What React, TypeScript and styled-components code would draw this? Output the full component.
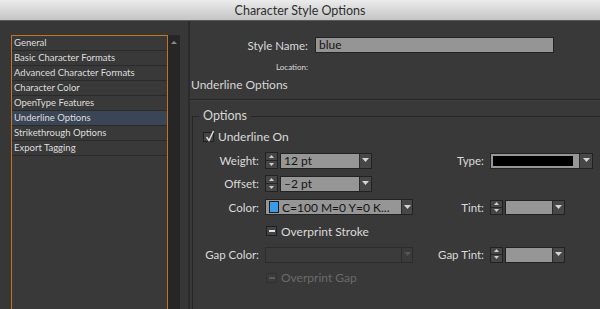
import React from 'react';
import styled, { createGlobalStyle } from 'styled-components';

const Global = createGlobalStyle`
  html, body { margin: 0; padding: 0; background: #393939; }
  body { font-family: Lato, "Open Sans", sans-serif; }
  * { box-sizing: border-box; }
`;

const Window = styled.div`
  width: 600px;
  height: 309px;
  overflow: hidden;
  display: flex;
  flex-direction: column;
  background: #393939;
`;

const TitleBar = styled.div`
  height: 21px;
  flex: none;
  display: flex;
  align-items: center;
  justify-content: center;
  background: linear-gradient(#ececec, #c4c4c4);
  border-bottom: 1px solid #585858;
  font-size: 12.5px;
  color: #2e2e2e;
`;

const Body = styled.div`
  flex: 1;
  display: flex;
  min-height: 0;
`;

const Sidebar = styled.div`
  width: 190px;
  flex: none;
  display: flex;
  padding: 14px 0 0 11px;
  border-right: 2px solid #2b2b2b;
  background: #373737;
`;

const List = styled.div`
  width: 157px;
  border: 1px solid #c37422;
  border-bottom: none;
  background: #393939;
  display: flex;
  flex-direction: column;
`;

const ListItem = styled.div<{ $selected?: boolean }>`
  height: 15px;
  flex: none;
  border-bottom: 1px solid #2a2a2a;
  padding-left: 2px;
  font-size: 9.5px;
  line-height: 14px;
  color: #dedede;
  background: ${(p) => (p.$selected ? '#3a4556' : 'transparent')};
  white-space: nowrap;
`;

const Scrollbar = styled.div`
  width: 12px;
  background: #262626;
  display: flex;
  justify-content: center;
  padding-top: 6px;
`;

const Main = styled.div`
  flex: 1;
  display: flex;
  flex-direction: column;
  min-width: 0;
`;

const StyleRow = styled.div`
  display: flex;
  align-items: center;
  margin-top: 16px;
  height: 16px;
`;

const Label = styled.div<{ $size?: number; $dim?: boolean }>`
  font-size: ${(p) => p.$size ?? 11.5}px;
  color: ${(p) => (p.$dim ? '#6a6a6a' : '#dadada')};
  white-space: nowrap;
`;

const RightLabel = styled(Label)<{ $w: number; $pad?: number }>`
  width: ${(p) => p.$w}px;
  flex: none;
  text-align: right;
  padding-right: ${(p) => p.$pad ?? 0}px;
`;

const NameInput = styled.div`
  margin-left: 7px;
  width: 239px;
  height: 16px;
  background: #959595;
  border: 1px solid #232323;
  font-size: 12px;
  line-height: 14px;
  color: #151515;
  padding-left: 3px;
`;

const LocationRow = styled.div`
  margin-top: 9px;
  height: 10px;
  display: flex;
  align-items: center;
`;

const Heading = styled.div`
  margin-top: 6px;
  height: 14px;
  font-size: 12px;
  line-height: 14px;
  color: #d6d6d6;
  padding-left: 1px;
`;

const Rule = styled.div`
  margin-top: 7px;
  height: 2px;
  border-top: 1px solid #262626;
  border-bottom: 1px solid #3d3d3d;
`;

const Fieldset = styled.fieldset`
  margin: 8px 0 0 2px;
  padding: 0;
  min-width: 0;
  flex: 1;
  border: 1px solid #262626;
  border-right: none;
  border-bottom: none;
`;

const Legend = styled.legend`
  margin-left: 6px;
  padding: 0 4px;
  font-size: 12.5px;
  line-height: 14px;
  color: #d6d6d6;
`;

const CheckRow = styled.div`
  display: flex;
  align-items: center;
  margin: 8px 0 0 10px;
  height: 11px;
  gap: 4px;
`;

const Box = styled.div<{ $dim?: boolean }>`
  width: 11px;
  height: 10px;
  flex: none;
  position: relative;
  background: ${(p) => (p.$dim ? '#3a3a3a' : '#444')};
  border: 1px solid ${(p) => (p.$dim ? '#303030' : '#1f1f1f')};
  display: flex;
  align-items: center;
  justify-content: center;
`;

const Dash = styled.div<{ $dim?: boolean }>`
  width: 6px;
  height: 2px;
  background: ${(p) => (p.$dim ? '#5a5a5a' : '#e4e4e4')};
`;

const CheckMark = styled.svg`
  position: absolute;
  left: 1px;
  top: -3px;
`;

const Grid = styled.div`
  margin-top: 7px;
  display: grid;
  grid-template-columns: 72px 148px 77px 120px;
  grid-template-rows: 23px 23px 24px 24px 23px 23px;
  align-items: center;
`;

const Cell = styled.div`
  display: flex;
  align-items: center;
  gap: 2px;
`;

const CheckCell = styled(Cell)`
  gap: 4px;
  padding-left: 1px;
`;

const Spinner = styled.div<{ $h: number; $w?: number }>`
  width: ${(p) => p.$w ?? 13}px;
  height: ${(p) => p.$h}px;
  flex: none;
  border: 1px solid #222;
  background: #3d3d3d;
  display: flex;
  flex-direction: column;
`;

const SpinHalf = styled.div<{ $down?: boolean }>`
  flex: 1;
  display: flex;
  align-items: center;
  justify-content: center;
  border-top: ${(p) => (p.$down ? '1px solid #262626' : 'none')};
  background: #464646;
`;

const Combo = styled.div<{ $w: number; $h: number; $dim?: boolean; $arrow?: number }>`
  width: ${(p) => p.$w}px;
  height: ${(p) => p.$h}px;
  flex: none;
  display: flex;
  border: 1px solid ${(p) => (p.$dim ? '#2c2c2c' : '#222')};
  background: ${(p) => (p.$dim ? '#3b3b3b' : '#969696')};
`;

const ComboText = styled.div`
  flex: 1;
  min-width: 0;
  display: flex;
  align-items: center;
  gap: 3px;
  padding-left: 3px;
  font-size: 12px;
  color: #141414;
  white-space: nowrap;
  overflow: hidden;
`;

const ArrowPart = styled.div<{ $w: number; $dim?: boolean }>`
  width: ${(p) => p.$w}px;
  flex: none;
  display: flex;
  align-items: center;
  justify-content: center;
  border-left: 1px solid ${(p) => (p.$dim ? '#2c2c2c' : '#2a2a2a')};
  background: ${(p) => (p.$dim ? '#3b3b3b' : '#474747')};
`;

const Swatch = styled.div`
  width: 10px;
  height: 12px;
  flex: none;
  background: #3a9ce9;
  border: 1px solid #1d1d1d;
`;

const Stripe = styled.div`
  flex: 1;
  margin: 2px 6px 2px 2px;
  background: #000;
`;

const Tri = ({ up, color = '#d4d4d4', w = 7 }: { up?: boolean; color?: string; w?: number }) => (
  <svg width={w} height={Math.ceil(w / 2) + 1} viewBox={`0 0 ${w} ${Math.ceil(w / 2) + 1}`}>
    {up ? (
      <polygon points={`0,${Math.ceil(w / 2)} ${w},${Math.ceil(w / 2)} ${w / 2},0`} fill={color} />
    ) : (
      <polygon points={`0,0 ${w},0 ${w / 2},${Math.ceil(w / 2)}`} fill={color} />
    )}
  </svg>
);

const Spin = ({ h, w }: { h: number; w?: number }) => (
  <Spinner $h={h} $w={w}>
    <SpinHalf>
      <Tri up w={5} color="#cfcfcf" />
    </SpinHalf>
    <SpinHalf $down>
      <Tri w={5} color="#cfcfcf" />
    </SpinHalf>
  </Spinner>
);

const items = [
  'General',
  'Basic Character Formats',
  'Advanced Character Formats',
  'Character Color',
  'OpenType Features',
  'Underline Options',
  'Strikethrough Options',
  'Export Tagging',
];

export default function App() {
  return (
    <Window>
      <Global />
      <TitleBar>Character Style Options</TitleBar>
      <Body>
        <Sidebar>
          <List>
            {items.map((t) => (
              <ListItem key={t} $selected={t === 'Underline Options'}>
                {t}
              </ListItem>
            ))}
          </List>
          <Scrollbar>
            <Tri up w={6} color="#8a8a8a" />
          </Scrollbar>
        </Sidebar>
        <Main>
          <StyleRow>
            <RightLabel $w={118}>Style Name:</RightLabel>
            <NameInput>blue</NameInput>
          </StyleRow>
          <LocationRow>
            <RightLabel $w={118} $size={8}>
              Location:
            </RightLabel>
          </LocationRow>
          <Heading>Underline Options</Heading>
          <Rule />
          <Fieldset>
            <Legend>Options</Legend>
            <CheckRow>
              <Box>
                <CheckMark width="10" height="12" viewBox="0 0 10 12">
                  <path d="M1.5 7 L4 10.5 L8.5 1" stroke="#e2e2e2" strokeWidth="1.4" fill="none" />
                </CheckMark>
              </Box>
              <Label $size={12}>Underline On</Label>
            </CheckRow>
            <Grid>
              <RightLabel $w={72} $pad={6}>Weight:</RightLabel>
              <Cell>
                <Spin h={17} />
                <Combo $w={92} $h={16}>
                  <ComboText>12 pt</ComboText>
                  <ArrowPart $w={12}>
                    <Tri w={7} />
                  </ArrowPart>
                </Combo>
              </Cell>
              <RightLabel $w={77} $pad={6}>Type:</RightLabel>
              <Cell>
                <Combo $w={103} $h={16}>
                  <Stripe />
                  <ArrowPart $w={13}>
                    <Tri w={7} />
                  </ArrowPart>
                </Combo>
              </Cell>

              <RightLabel $w={72} $pad={6}>Offset:</RightLabel>
              <Cell>
                <Spin h={17} />
                <Combo $w={92} $h={16}>
                  <ComboText>–2 pt</ComboText>
                  <ArrowPart $w={12}>
                    <Tri w={7} />
                  </ArrowPart>
                </Combo>
              </Cell>
              <div />
              <div />

              <RightLabel $w={72} $pad={6}>Color:</RightLabel>
              <Cell>
                <Combo $w={148} $h={16}>
                  <ComboText>
                    <Swatch />
                    C=100 M=0 Y=0 K...
                  </ComboText>
                  <ArrowPart $w={11}>
                    <Tri w={7} />
                  </ArrowPart>
                </Combo>
              </Cell>
              <RightLabel $w={77} $pad={6}>Tint:</RightLabel>
              <Cell>
                <Spin h={15} />
                <Combo $w={60} $h={15}>
                  <ComboText />
                  <ArrowPart $w={12}>
                    <Tri w={7} />
                  </ArrowPart>
                </Combo>
              </Cell>

              <div />
              <CheckCell>
                <Box>
                  <Dash />
                </Box>
                <Label $size={12}>Overprint Stroke</Label>
              </CheckCell>
              <div />
              <div />

              <RightLabel $w={72} $pad={6}>Gap Color:</RightLabel>
              <Cell>
                <Combo $w={148} $h={16} $dim>
                  <ComboText />
                  <ArrowPart $w={11} $dim>
                    <Tri w={7} color="#555" />
                  </ArrowPart>
                </Combo>
              </Cell>
              <RightLabel $w={77} $pad={6}>Gap Tint:</RightLabel>
              <Cell>
                <Spin h={16} />
                <Combo $w={60} $h={16}>
                  <ComboText />
                  <ArrowPart $w={12}>
                    <Tri w={7} />
                  </ArrowPart>
                </Combo>
              </Cell>

              <div />
              <CheckCell>
                <Box $dim>
                  <Dash $dim />
                </Box>
                <Label $size={12} $dim>
                  Overprint Gap
                </Label>
              </CheckCell>
              <div />
              <div />
            </Grid>
          </Fieldset>
        </Main>
      </Body>
    </Window>
  );
}
